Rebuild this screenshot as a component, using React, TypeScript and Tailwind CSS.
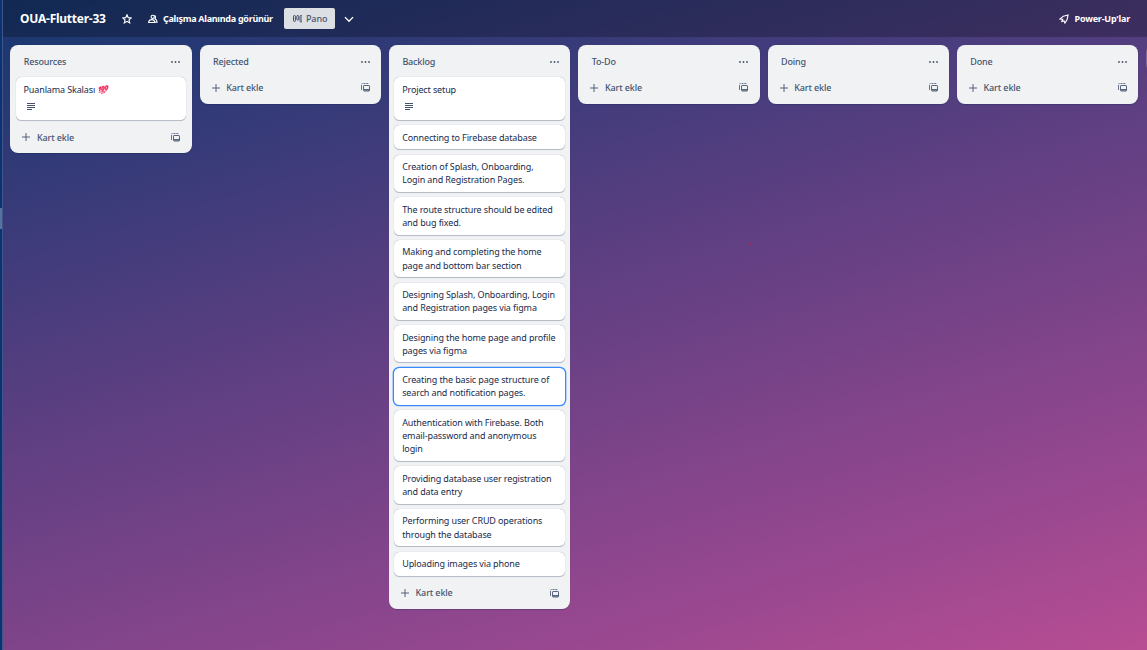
import type { ReactNode } from 'react';

type Card = { lines: string[]; hasDescription?: boolean; emoji?: boolean; selected?: boolean };
type List = { title: string; cards: Card[] };

const lists: List[] = [
  { title: 'Resources', cards: [{ lines: ['Puanlama Skalası'], hasDescription: true, emoji: true }] },
  { title: 'Rejected', cards: [] },
  {
    title: 'Backlog',
    cards: [
      { lines: ['Project setup'], hasDescription: true },
      { lines: ['Connecting to Firebase database'] },
      { lines: ['Creation of Splash, Onboarding,', 'Login and Registration Pages.'] },
      { lines: ['The route structure should be edited', 'and bug fixed.'] },
      { lines: ['Making and completing the home', 'page and bottom bar section'] },
      { lines: ['Designing Splash, Onboarding, Login', 'and Registration pages via figma'] },
      { lines: ['Designing the home page and profile', 'pages via figma'] },
      { lines: ['Creating the basic page structure of', 'search and notification pages.'], selected: true },
      { lines: ['Authentication with Firebase. Both', 'email-password and anonymous', 'login'] },
      { lines: ['Providing database user registration', 'and data entry'] },
      { lines: ['Performing user CRUD operations', 'through the database'] },
      { lines: ['Uploading images via phone'] },
    ],
  },
  { title: 'To-Do', cards: [] },
  { title: 'Doing', cards: [] },
  { title: 'Done', cards: [] },
];

function Icon({ children, className }: { children: ReactNode; className: string }) {
  return (
    <svg viewBox="0 0 16 16" fill="none" stroke="currentColor" strokeWidth="1.8" className={className}>
      {children}
    </svg>
  );
}

function Hundred() {
  return (
    <svg viewBox="0 0 20 16" className="ml-[3px] h-[9px] w-[11px]" fill="none" stroke="#f92f60" strokeLinecap="round">
      <path d="M2 5.500 4.500 4 3 10" strokeWidth="2.600" />
      <ellipse cx="9" cy="6" rx="1.800" ry="3.600" transform="rotate(20 9 6)" strokeWidth="2.600" />
      <ellipse cx="15.500" cy="4.600" rx="1.900" ry="3.400" transform="rotate(20 15.500 4.600)" strokeWidth="2.600" />
      <path d="M2 13 15 10.500M6 15l6-1.500" strokeWidth="1.500" />
    </svg>
  );
}

function CardView({ card }: { card: Card }) {
  return (
    <div
      className={
        'rounded-[5.33px] bg-white px-[7.8px] py-[5.33px] text-[#172b4d] ' +
        (card.selected
          ? 'shadow-[0_0_0_1.33px_#388bff]'
          : 'shadow-[0_0.67px_0.67px_#091e4240,0_0_0.67px_#091e424f]')
      }
    >
      {card.lines.map((line) => (
        <div key={line} className="flex items-center whitespace-nowrap">
          {line}
          {card.emoji && <Hundred />}
        </div>
      ))}
      {card.hasDescription && (
        <div className="h-[18.67px] pt-[7px] pl-[3.2px] text-[#44546f]">
          <svg viewBox="0 0 8 7" className="h-[7px] w-[8px]" fill="none" stroke="currentColor" shapeRendering="crispEdges">
            <path d="M0 .5h8M0 2.500h8M0 4.500h8M0 6.500h5" />
          </svg>
        </div>
      )}
    </div>
  );
}

function ListView({ list }: { list: List }) {
  return (
    <section className="w-[181.33px] shrink-0 rounded-[8px] bg-[#f1f2f4] text-[#44546f] shadow-[0_0.67px_0.67px_#091e4240]">
      <header className="flex h-[32px] items-center justify-between pt-[1px] pr-[11.500px] pl-[13.33px] font-medium">
        <h2 className="tracking-[-0.17px]">{list.title}</h2>
        <svg viewBox="0 0 10 2" className="h-[2px] w-[9px]" fill="currentColor">
          <circle cx="1.1" cy="1" r="1" />
          <circle cx="5" cy="1" r="1" />
          <circle cx="8.9" cy="1" r="1" />
        </svg>
      </header>
      <div className="flex flex-col gap-[5.33px] px-[5.33px]">
        {list.cards.map((card) => (
          <CardView key={card.lines[0]} card={card} />
        ))}
      </div>
      <footer
        className={
          'flex items-center pr-[11.500px] pl-[12px] font-medium ' +
          (list.cards.length > 0 ? 'h-[33px] pt-[1.8px]' : 'h-[27px] pb-[6px]')
        }
      >
        <Icon className="h-[8px] w-[8px]">
          <path d="M8 0v16M0 8h16" />
        </Icon>
        <span className="ml-[6.5px] flex-1">Kart ekle</span>
        <svg viewBox="0 0 9 9" className="h-[9px] w-[9px]" fill="none" stroke="currentColor">
          <path d="M.5 7V2M.5.7h1.200M2.500.5h2M5.300.5h2" strokeWidth=".8" />
          <rect x="2.500" y="2.500" width="6" height="5.500" rx=".6" strokeWidth=".9" />
          <path d="M3 6.800h5.500" strokeWidth="1.400" />
        </svg>
      </footer>
    </section>
  );
}

export default function App() {
  return (
    <div className="relative flex h-[650px] w-[1147px] overflow-hidden bg-[linear-gradient(163.4deg,#16376f_0%,#433c7c_28.5%,#5f3f82_45.6%,#9a4890_82.9%,#b84d93_100%)] font-['Noto_Sans','Open_Sans',sans-serif] text-[9px] leading-[13.33px] tracking-[-0.125px]">
      <aside className="flex w-[3px] shrink-0 flex-col border-r border-[#43548a] bg-[#093470] pt-[208px]">
        <div className="h-[21px] bg-[#5872a0]" />
      </aside>
      <main className="min-w-0 flex-1">
        <header className="flex h-[37.33px] items-center bg-[#00000040] pl-[17px] font-bold text-white">
          <h1 className="w-[101.5px] text-[12px] leading-[16px] tracking-[-0.24px] whitespace-nowrap">OUA-Flutter-33</h1>
          <Icon className="h-[10px] w-[10px]">
            <path d="m8 1.300 2 4.500 4.800.5-3.600 3.200 1.100 4.800L8 11.800l-4.300 2.500 1.100-4.800L1.200 6.300l4.800-.5z" />
          </Icon>
          <Icon className="ml-[16px] h-[10px] w-[10px]">
            <circle cx="7.500" cy="4.500" r="2.600" />
            <path d="M1 13.500c.5-3 3-4.500 5-4.500s4.500 1.500 5 4.500zM10 2.500c2.500.5 2.500 3.500 1 5.200 2 .8 3.500 2.800 3.500 5.300H12" />
          </Icon>
          <span className="ml-[5.5px] w-[121px] tracking-[-0.28px] whitespace-nowrap">Çalışma Alanında görünür</span>
          <div className="flex h-[21.33px] w-[51px] items-center rounded-[2px] bg-[#dcdfe4] pl-[8.5px] font-medium text-[#44546f]">
            <svg viewBox="0 0 9.500 10" className="h-[10px] w-[9.500px] text-[#2c3e5d]" fill="none" stroke="currentColor" strokeWidth=".9">
              <rect x=".5" y="1.500" width="1.900" height="6" rx=".9" />
              <rect x="3.800" y="1.500" width="1.900" height="4.500" rx=".9" />
              <rect x="7.100" y="1.500" width="1.900" height="6.500" rx=".9" />
            </svg>
            <span className="ml-[4px]">Pano</span>
          </div>
          <Icon className="ml-[8.5px] h-[10px] w-[10px]">
            <path d="m1.500 5 6.500 6.500L14.500 5" strokeWidth="2.200" />
          </Icon>
          <Icon className="ml-auto h-[10px] w-[10px]">
            <path d="M14.500 1.500 7 3.500 1.500 8l4.500.5-1.500 3.500L8 11l1.500 3.500L13 9z" />
          </Icon>
          <span className="ml-[6px] w-[72.5px] tracking-[-0.2px] whitespace-nowrap">Power-Up'lar</span>
        </header>
        <div className="flex items-start gap-2 pt-[8px] pl-[7.400px]">
          {lists.map((list) => (
            <ListView key={list.title} list={list} />
          ))}
          <div className="h-[27px] w-[181px] shrink-0 rounded-[8px] bg-[#ffffff3d]" />
        </div>
      </main>
      <i className="absolute top-[243px] left-[750px] h-px w-px bg-[#e0202a]" />
    </div>
  );
}
